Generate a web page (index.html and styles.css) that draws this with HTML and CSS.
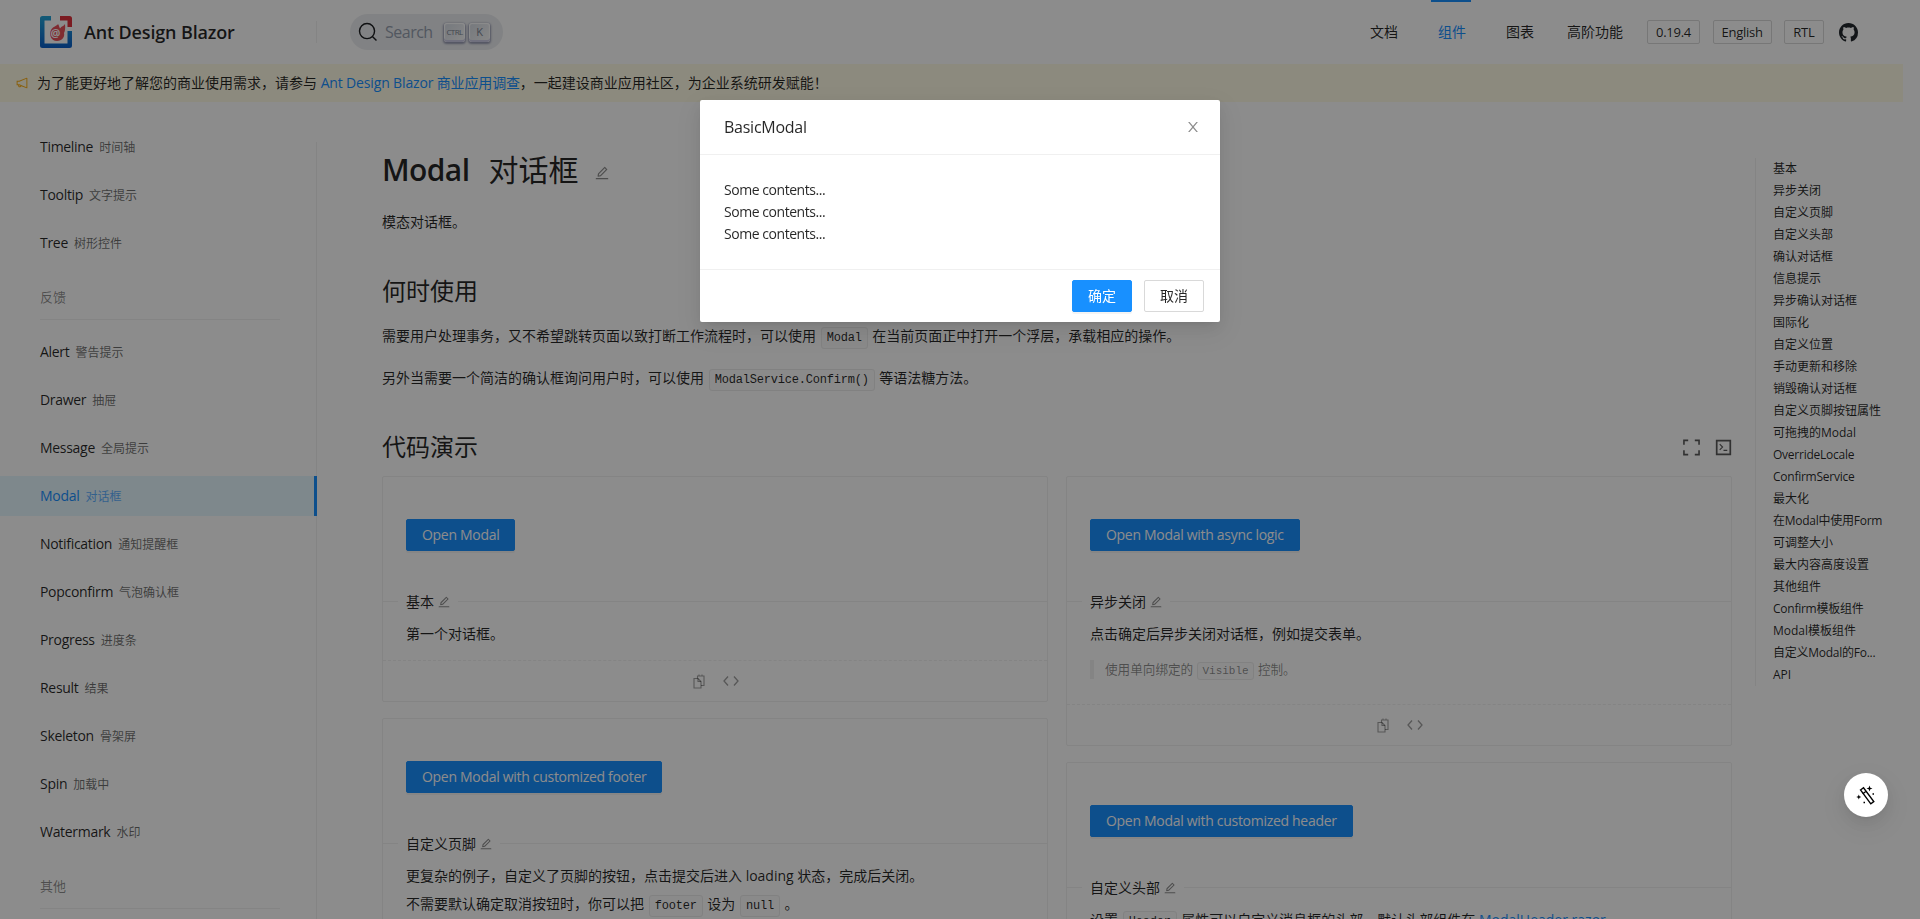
FILE: index.html
```html
<!DOCTYPE html>
<html lang="zh-CN">
<head>
<meta charset="utf-8">
<title>Modal 对话框 - Ant Design Blazor</title>
<link rel="stylesheet" href="styles.css">
</head>
<body>
<div class="page">
  <header class="topbar">
    <a class="brand">
      <svg class="brand-logo" viewBox="0 0 32 32">
        <defs><linearGradient id="logo-blue" x1="0" y1="0" x2="0" y2="1"><stop offset="0" stop-color="#25a5d8"/><stop offset="1" stop-color="#0b5fc9"/></linearGradient></defs>
        <path d="M11 0H2.500A2.500 2.500 0 0 0 0 2.500v27A2.500 2.500 0 0 0 2.500 32h27a2.500 2.500 0 0 0 2.500-2.500V15h-4.500v12.500H4.500V4.500H11z" fill="url(#logo-blue)"/>
        <path d="M20 0h9.500A2.500 2.500 0 0 1 32 2.500V11h-4.500V4.500H20z" fill="#e0323c"/>
        <path d="M25 8c-1.500 2.500-3.500 2-5 4.500-1-2-1-3-2-4.500-1 2-5 2.500-7 6-2.200 4.500 0 11 6 11 5 0 8-4 7-8 1-1.500 1.500-5 1-9z" fill="#e8505a"/>
        <text x="15.500" y="21" class="brand-at">@</text>
      </svg>
      <span class="brand-name">Ant Design Blazor</span>
    </a>
    <div class="search">
      <svg class="search-icon" viewBox="0 0 20 20"><path d="M14.386 14.386l4.088 4.088-4.088-4.088A7.533 7.533 0 1 1 3.733 3.733a7.533 7.533 0 0 1 10.653 10.653z" fill="none" stroke="currentColor" stroke-width="1.400"/></svg>
      <span class="search-text">Search</span>
      <kbd class="key key-ctrl">CTRL</kbd>
      <kbd class="key">K</kbd>
    </div>
    <nav class="topnav">
      <a class="topnav-item">文档</a>
      <a class="topnav-item is-active">组件</a>
      <a class="topnav-item">图表</a>
      <a class="topnav-item topnav-last">高阶功能</a>
    </nav>
    <div class="top-actions">
      <span class="ghost">0.19.4</span>
      <span class="ghost">English</span>
      <span class="ghost">RTL</span>
      <svg class="github" viewBox="0 0 16 16"><path fill="currentColor" d="M8 0C3.58 0 0 3.580 0 8c0 3.540 2.290 6.530 5.470 7.590.4.07.55-.17.55-.38 0-.19-.01-.82-.01-1.490-2.010.37-2.530-.49-2.690-.94-.09-.23-.48-.94-.82-1.130-.28-.15-.68-.52-.01-.53.63-.01 1.080.58 1.230.82.72 1.210 1.870.87 2.330.66.07-.52.28-.87.51-1.070-1.780-.2-3.640-.89-3.640-3.950 0-.87.31-1.590.82-2.150-.08-.2-.36-1.020.08-2.120 0 0 .67-.21 2.200.82.64-.18 1.320-.27 2-.27.68 0 1.360.09 2 .27 1.530-1.040 2.200-.82 2.200-.82.44 1.100.16 1.920.08 2.120.51.56.82 1.270.82 2.150 0 3.070-1.870 3.750-3.650 3.950.29.25.54.73.54 1.480 0 1.070-.01 1.930-.01 2.200 0 .21.15.46.55.38A8.013 8.013 0 0 0 16 8c0-4.420-3.580-8-8-8z"/></svg>
    </div>
  </header>

  <div class="banner">
    <svg class="banner-icon" viewBox="64 64 896 896"><path fill="currentColor" d="M880 112c-3.800 0-7.700.7-11.600 2.300L292 345.900H128c-8.800 0-16 7.400-16 16.600v299c0 9.200 7.200 16.600 16 16.600h101.700c-3.700 11.600-5.700 23.900-5.700 36.400 0 65.900 53.800 119.500 120 119.500 55.400 0 102.100-37.600 115.900-88.400l408.600 164.200c3.900 1.500 7.800 2.300 11.600 2.300 16.900 0 32-14.200 32-33.200V145.200C912 126.200 897 112 880 112zM344 762.300c-26.500 0-48-21.400-48-47.800 0-11.200 3.900-21.900 11-30.400l84.900 34.100c-2 24.600-22.700 44.100-47.900 44.100zm496 58.400L318.800 611.300l-12.900-5.200H184V417.900h121.900l12.900-5.200L840 203.300v617.400z"/></svg>
    <span>为了能更好地了解您的商业使用需求，请参与 <a class="link link-tight">Ant Design Blazor 商业应用调查</a>，一起建设商业应用社区，为企业系统研发赋能！</span>
  </div>

  <div class="layout">
    <aside class="sidebar">
      <ul class="menu">
        <li class="menu-item">Timeline<small>时间轴</small></li>
        <li class="menu-item">Tooltip<small>文字提示</small></li>
        <li class="menu-item">Tree<small>树形控件</small></li>
        <li class="menu-group">反馈</li>
        <li class="menu-item">Alert<small>警告提示</small></li>
        <li class="menu-item">Drawer<small>抽屉</small></li>
        <li class="menu-item">Message<small>全局提示</small></li>
        <li class="menu-item is-active">Modal<small>对话框</small></li>
        <li class="menu-item">Notification<small>通知提醒框</small></li>
        <li class="menu-item">Popconfirm<small>气泡确认框</small></li>
        <li class="menu-item">Progress<small>进度条</small></li>
        <li class="menu-item">Result<small>结果</small></li>
        <li class="menu-item">Skeleton<small>骨架屏</small></li>
        <li class="menu-item">Spin<small>加载中</small></li>
        <li class="menu-item">Watermark<small>水印</small></li>
        <li class="menu-group">其他</li>
      </ul>
    </aside>

    <main class="content">
      <h1 class="title"><span class="title-en">Modal</span><span class="title-cn">对话框</span>
        <svg class="edit edit-lg" viewBox="64 64 896 896"><use href="#i-edit"/></svg>
      </h1>
      <p class="intro">模态对话框。</p>
      <h2 class="section-first">何时使用</h2>
      <p class="para-a">需要用户处理事务，又不希望跳转页面以致打断工作流程时，可以使用 <code>Modal</code> 在当前页面正中打开一个浮层，承载相应的操作。</p>
      <p class="para-b">另外当需要一个简洁的确认框询问用户时，可以使用 <code>ModalService.Confirm()</code> 等语法糖方法。</p>

      <div class="demo-head">
        <h2>代码演示</h2>
        <div class="demo-tools">
          <svg class="tool" viewBox="0 0 18 18"><path d="M1 6V1.500h4.500M12.500 1.500H17V6M17 12v4.500h-4.500M5.500 16.500H1V12" fill="none" stroke="currentColor" stroke-width="1.700"/></svg>
          <svg class="tool" viewBox="0 0 18 18"><path d="M1.800 1.800h14.400v14.400H1.800z" fill="none" stroke="currentColor" stroke-width="1.800"/><path d="M5 5.500l3 3-3 3M9 12h4" fill="none" stroke="currentColor" stroke-width="1.200"/></svg>
        </div>
      </div>

      <div class="demos">
        <div class="demo-col">
          <section class="card">
            <div class="card-demo"><button class="btn btn-primary btn-latin">Open Modal</button></div>
            <div class="card-meta">
              <div class="card-title">基本<svg class="edit" viewBox="64 64 896 896"><use href="#i-edit"/></svg></div>
              <p>第一个对话框。</p>
            </div>
            <div class="card-actions">
              <svg class="act" viewBox="0 0 16 16"><use href="#i-copy"/></svg>
              <svg class="act" viewBox="0 0 16 16"><use href="#i-code"/></svg>
            </div>
          </section>
          <section class="card">
            <div class="card-demo"><button class="btn btn-primary btn-latin">Open Modal with customized footer</button></div>
            <div class="card-meta">
              <div class="card-title">自定义页脚<svg class="edit" viewBox="64 64 896 896"><use href="#i-edit"/></svg></div>
              <p>更复杂的例子，自定义了页脚的按钮，点击提交后进入 loading 状态，完成后关闭。</p>
              <p class="next">不需要默认确定取消按钮时，你可以把 <code>footer</code> 设为 <code>null</code> 。</p>
            </div>
          </section>
        </div>
        <div class="demo-col">
          <section class="card">
            <div class="card-demo"><button class="btn btn-primary btn-latin">Open Modal with async logic</button></div>
            <div class="card-meta">
              <div class="card-title">异步关闭<svg class="edit" viewBox="64 64 896 896"><use href="#i-edit"/></svg></div>
              <p>点击确定后异步关闭对话框，例如提交表单。</p>
              <blockquote>使用单向绑定的 <code>Visible</code> 控制。</blockquote>
            </div>
            <div class="card-actions">
              <svg class="act" viewBox="0 0 16 16"><use href="#i-copy"/></svg>
              <svg class="act" viewBox="0 0 16 16"><use href="#i-code"/></svg>
            </div>
          </section>
          <section class="card">
            <div class="card-demo"><button class="btn btn-primary btn-latin">Open Modal with customized header</button></div>
            <div class="card-meta">
              <div class="card-title">自定义头部<svg class="edit" viewBox="64 64 896 896"><use href="#i-edit"/></svg></div>
              <p>设置 <code>Header</code> 属性可以自定义消息框的头部，默认头部组件在 <a class="link">ModalHeader.razor</a></p>
            </div>
          </section>
        </div>
      </div>
    </main>

    <nav class="anchor">
      <a>基本</a><a>异步关闭</a><a>自定义页脚</a><a>自定义头部</a><a>确认对话框</a><a>信息提示</a><a>异步确认对话框</a><a>国际化</a><a>自定义位置</a><a>手动更新和移除</a><a>销毁确认对话框</a><a>自定义页脚按钮属性</a><a>可拖拽的Modal</a><a class="anchor-latin">OverrideLocale</a><a class="anchor-latin">ConfirmService</a><a>最大化</a><a class="anchor-latin">在Modal中使用Form</a><a>可调整大小</a><a>最大内容高度设置</a><a>其他组件</a><a class="anchor-latin">Confirm模板组件</a><a>Modal模板组件</a><a class="anchor-latin">自定义Modal的Fo...</a><a>API</a>
    </nav>
  </div>
</div>

<div class="mask"></div>
<div class="modal-wrap">
  <div class="modal" role="dialog">
    <div class="modal-header">
      <span class="modal-title">BasicModal</span>
      <svg class="modal-close" viewBox="64 64 896 896"><path fill="currentColor" d="M563.800 512l262.500-312.900c4.400-5.200.7-13.100-6.100-13.100h-79.800c-4.700 0-9.200 2.100-12.300 5.700L511.600 449.800 295.100 191.700c-3-3.600-7.500-5.700-12.300-5.700H203c-6.800 0-10.500 7.900-6.100 13.100L459.400 512 196.900 824.900A7.950 7.950 0 0 0 203 838h79.800c4.700 0 9.200-2.100 12.300-5.700l216.500-258.100 216.500 258.100c3 3.600 7.500 5.700 12.300 5.700h79.800c6.800 0 10.500-7.900 6.100-13.100L563.800 512z"/></svg>
    </div>
    <div class="modal-body">
      <div>Some contents...</div>
      <div>Some contents...</div>
      <div>Some contents...</div>
    </div>
    <div class="modal-footer">
      <button class="btn btn-primary">确定</button>
      <button class="btn">取消</button>
    </div>
  </div>
</div>

<button class="fab" aria-label="theme">
  <svg viewBox="0 0 20 20"><path d="M4.500 5L7.500 2.800 17.800 16.600 14.800 18.800z" fill="none" stroke="currentColor" stroke-width="1.400"/><path d="M6.800 8.700l3-2.200" stroke="currentColor" stroke-width="1.400"/><path d="M13.500 .5l.8 2.200 2.200.8-2.200.8-.8 2.200-.8-2.200-2.200-.8 2.200-.8zM2.800 9.500l.7 1.800 1.800.7-1.800.7-.7 1.800-.7-1.800-1.800-.7 1.800-.7zM16.500 8.200h1.500v1.500h-1.500zM7.500 16.800H9v1.500H7.500z" fill="currentColor"/></svg>
</button>

<svg class="defs" aria-hidden="true">
  <defs>
    <path id="i-edit" fill="currentColor" d="M257.700 752c2 0 4-.2 6-.5L431.900 722c2-.4 3.900-1.300 5.300-2.800l423.900-423.900a9.960 9.960 0 0 0 0-14.100L694.900 114.900c-1.900-1.900-4.400-2.900-7.100-2.900s-5.200 1-7.100 2.900L256.800 538.800c-1.500 1.500-2.400 3.300-2.800 5.300l-29.500 168.200a33.500 33.500 0 0 0 9.400 29.800c6.600 6.400 14.900 9.900 23.800 9.900zm67.400-174.400L687.800 215l73.300 73.300-362.700 362.600-88.900 15.700 15.600-89zM880 836H144c-17.700 0-32 14.300-32 32v36c0 4.400 3.600 8 8 8h784c4.400 0 8-3.600 8-8v-36c0-17.700-14.300-32-32-32z"/>
    <g id="i-copy" fill="none" stroke="currentColor" stroke-width="1.100"><path d="M3 5.500h4l3 3v6.500H3z"/><path d="M6.500 5.500V3h6.500v9.500h-3M7 5.500v3h3M8 1.500v2M11 1.500v2"/></g>
    <path id="i-code" fill="none" stroke="currentColor" stroke-width="1.300" d="M5 3.500L1 8l4 4.500M11 3.500L15 8l-4 4.500"/>
  </defs>
</svg>
</body>
</html>
```
FILE: styles.css
```css
* { box-sizing: border-box; }
html, body { margin: 0; padding: 0; height: 100%; overflow: hidden; background: #fff; }
body {
  width: calc(100% - 17px);
  font-family: "Open Sans", "Noto Sans CJK SC", sans-serif;
  font-size: 14px;
  line-height: 22px;
  color: rgba(0, 0, 0, .85);
}
h1, h2, p, ul { margin: 0; padding: 0; }
ul { list-style: none; }
.defs { position: absolute; width: 0; height: 0; }
.link { color: #1890ff; }
.link-tight { letter-spacing: -.15px; }

.topbar { height: 64px; display: flex; align-items: center; background: #fff; }
.brand { width: 317px; height: 22px; padding-left: 40px; display: flex; align-items: center; border-right: 1px solid #f0f0f0; }
.brand-logo { width: 32px; height: 32px; flex: none; overflow: visible; }
.brand-at { font-size: 11px; fill: #fff; text-anchor: middle; font-weight: 700; }
.brand-name { margin-left: 12px; font-size: 18px; font-weight: 600; white-space: nowrap; letter-spacing: -.15px; }
.search { margin-left: 33px; width: 153px; height: 36px; border-radius: 18px; background: #ebedf0; display: flex; align-items: center; padding-left: 8px; color: #969faf; }
.search-icon { width: 20px; height: 20px; color: #1c1e21; flex: none; }
.search-text { margin-left: 7px; font-size: 16px; width: 59px; letter-spacing: -.5px; }
.key { width: 21px; height: 19px; margin-right: 4px; border-radius: 3px; display: flex; align-items: center; justify-content: center; font-size: 11px; font-family: "Open Sans", sans-serif; color: #7a8290; background: linear-gradient(-225deg, #d5dbe4, #f8f8f8); box-shadow: inset 0 -2px 0 0 #cdcde6, inset 0 0 1px 1px #fff, 0 1px 2px 1px rgba(30, 35, 90, .4); }
.key-ctrl { font-size: 8px; letter-spacing: -.6px; }
.topnav { margin-left: auto; display: flex; gap: 40px; height: 64px; }
.topnav-item { height: 64px; display: flex; align-items: center; border-top: 2px solid transparent; border-bottom: 2px solid transparent; }
.topnav-item.is-active { color: #1890ff; border-top-color: #1890ff; padding: 0 5px 0 7px; margin: 0 -5px 0 -7px; }
.topnav-last { margin-left: -7px; }
.top-actions { display: flex; align-items: center; gap: 12.500px; margin-left: 24px; margin-right: 45px; height: 24px; }
.ghost { height: 24px; padding: 0 8px; border: 1px solid #d9d9d9; border-radius: 2px; font-size: 13px; line-height: 22px; white-space: nowrap; letter-spacing: -.25px; }
.github { width: 19px; height: 19px; margin-left: 3px; color: #24292f; }

.banner { height: 38px; background: #fffbe6; display: flex; align-items: center; padding-left: 16px; gap: 9px; white-space: nowrap; }
.banner-icon { width: 12px; height: 14px; color: #faad14; flex: none; }

.layout { display: flex; align-items: flex-start; }
.sidebar { width: 317px; flex: none; height: 817px; overflow: hidden; position: relative; padding-top: 25px; }
.sidebar::before { content: ""; position: absolute; top: 40px; bottom: 0; right: 0; width: 1px; background: #f0f0f0; }
.menu-item { height: 40px; line-height: 40px; margin-bottom: 8px; padding-left: 40px; white-space: nowrap; letter-spacing: -.3px; }
.menu-item small { margin-left: 6px; font-size: 12px; opacity: .67; letter-spacing: 0; }
.menu-item.is-active { background: #e6f7ff; color: #1890ff; position: relative; }
.menu-item.is-active::after { content: ""; position: absolute; right: 0; top: 0; bottom: 0; width: 3px; background: #1890ff; }
.menu-group { margin: 23px 37px 12px 40px; padding-bottom: 11px; border-bottom: 1px solid #f0f0f0; font-size: 13px; color: rgba(0, 0, 0, .45); }

.content { width: 1415px; flex: none; padding-left: 65px; }
.title { margin-top: 49px; font-size: 30px; line-height: 38px; font-weight: 400; display: flex; align-items: center; }
.title-en { font-weight: 550; letter-spacing: -.6px; }
.title-cn { margin-left: 19px; }
.edit { width: 12px; height: 12px; color: rgba(0, 0, 0, .45); margin-left: 4px; vertical-align: -1px; }
.edit-lg { margin-left: 17px; width: 14px; height: 14px; margin-top: 6px; }
.intro { margin-top: 22px; }
h2 { font-size: 24px; line-height: 32px; font-weight: 400; }
.section-first { margin-top: 42px; }
.para-a { margin-top: 18px; }
.para-b { margin-top: 20px; }
code { line-height: 1; margin: 0 1px; padding: 3px 5px; font-family: "Liberation Mono", monospace; font-size: 12px; letter-spacing: -.2px; background: #fbfbfb; border: 1px solid #ececec; border-radius: 3px; }
blockquote code { font-size: 11px; letter-spacing: 0; padding: 2px 4px; }

.demo-head { margin-top: 42px; width: 1350px; display: flex; align-items: center; justify-content: space-between; }
.demo-tools { display: flex; gap: 15px; }
.tool { width: 17px; height: 17px; color: rgba(0, 0, 0, .65); }
.demos { margin-top: 13px; width: 1350px; display: grid; grid-template-columns: 666px 666px; column-gap: 18px; align-items: start; }
.demo-col { display: flex; flex-direction: column; gap: 16px; }
.card { border: 1px solid #f0f0f0; border-radius: 2px; }
.card-demo { padding: 42px 23px 50px; border-bottom: 1px solid #f0f0f0; }
.card-meta { position: relative; padding: 21px 23px 15px; }
.card-title { position: absolute; top: -11px; left: 15px; padding: 0 8px; background: #fff; display: flex; align-items: center; }
.next { margin-top: 6px; }
blockquote { margin: 15px 0 10px; padding-left: 11px; border-left: 4px solid #f0f0f0; height: 19px; line-height: 19px; font-size: 12.600px; color: rgba(0, 0, 0, .45); }
.card-actions { height: 41px; border-top: 1px dashed #f0f0f0; display: flex; align-items: center; justify-content: center; gap: 16px; color: rgba(0, 0, 0, .38); }
.act { width: 16px; height: 16px; }

.btn { height: 32px; padding: 0 15px; border: 1px solid #d9d9d9; border-radius: 2px; background: #fff; color: rgba(0, 0, 0, .85); font: inherit; white-space: nowrap; }
.btn-latin { letter-spacing: -.3px; }
.btn-primary { background: #1890ff; border-color: #1890ff; color: #fff; box-shadow: 0 2px 0 rgba(0, 0, 0, .045); }

.anchor { margin-top: 56px; width: 148px; margin-left: 23px; flex: none; border-left: 1px solid #f0f0f0; padding-left: 17px; display: flex; flex-direction: column; }
.anchor a { font-size: 12px; line-height: 22px; height: 22px; white-space: nowrap; }
.anchor .anchor-latin { letter-spacing: -.25px; }

.mask { position: fixed; inset: 0; background: rgba(0, 0, 0, .45); }
.modal-wrap { position: fixed; inset: 0; display: flex; justify-content: center; align-items: flex-start; padding-top: 100px; }
.modal { width: 520px; background: #fff; border-radius: 2px; box-shadow: 0 3px 6px -4px rgba(0, 0, 0, .12), 0 6px 16px rgba(0, 0, 0, .08), 0 9px 28px 8px rgba(0, 0, 0, .05); }
.modal-header { height: 55px; padding: 0 24px; border-bottom: 1px solid #f0f0f0; display: flex; align-items: center; justify-content: space-between; font-size: 16px; }
.modal-title { letter-spacing: -.25px; }
.modal-close { width: 14px; height: 14px; color: rgba(0, 0, 0, .45); margin-right: -4px; }
.modal-body { padding: 24px; letter-spacing: -.45px; }
.modal-footer { height: 53px; border-top: 1px solid #f0f0f0; padding: 10px 16px; display: flex; justify-content: flex-end; gap: 12px; }
.fab { position: fixed; left: 1844px; top: 773px; width: 44px; height: 44px; padding: 12px; border: 0; border-radius: 50%; background: #fff; color: #000; box-shadow: 0 6px 16px rgba(0, 0, 0, .08), 0 3px 6px -4px rgba(0, 0, 0, .12), 0 9px 28px 8px rgba(0, 0, 0, .05); }
.fab svg { display: block; width: 20px; height: 20px; }
```
